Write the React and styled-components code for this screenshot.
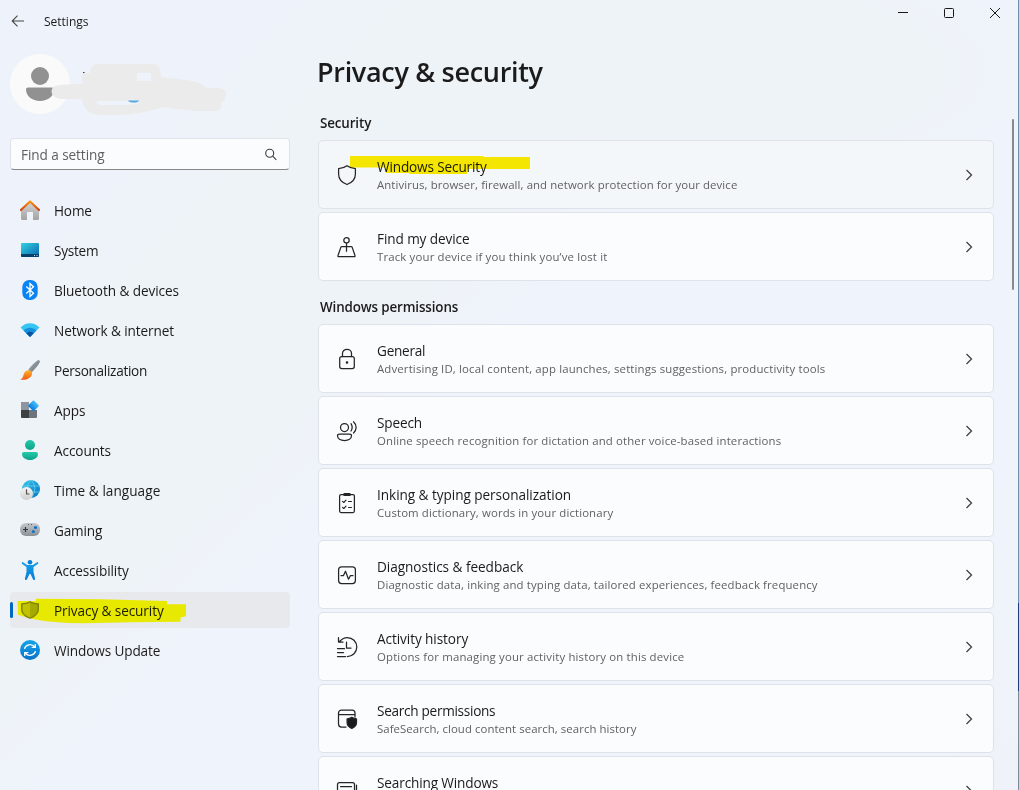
import React from "react";
import styled, { createGlobalStyle } from "styled-components";

const GlobalStyle = createGlobalStyle`
  * { box-sizing: border-box; }
  html, body { margin: 0; padding: 0; overflow: hidden; }
  body { font-family: "Open Sans", "Noto Sans", sans-serif; color: #1b1b1b; }
`;

const Window = styled.div`
  width: 1019px;
  height: 790px;
  display: flex;
  overflow: hidden;
  background:
    radial-gradient(ellipse 330px 130px at 730px 70px, #eef3f7 0 45%, #eef3f700 100%),
    linear-gradient(135deg, #eef3fb 0%, #eef3fb 15%, #eef3f7 26%, #eef3f7 36%, #eff3fb 47%, #eff3fb 80%, #eff3f9 100%);
`;

const Sidebar = styled.aside`
  width: 300px;
  flex: none;
  padding: 0 10px;
  display: flex;
  flex-direction: column;
`;

const TitleBar = styled.header`
  height: 42px;
  flex: none;
  display: flex;
  align-items: center;
  gap: 19px;
  font-size: 12px;
`;

const BackButton = styled.button`
  width: 15px;
  height: 14px;
  padding: 0;
  border: 0;
  background: none;
  display: flex;
`;

const Profile = styled.div`
  position: relative;
  height: 96px;
  flex: none;
  padding-top: 12px;
`;

const Avatar = styled.div`
  width: 60px;
  height: 60px;
  border-radius: 50%;
  background: #fafafa;
  display: flex;
  align-items: center;
  justify-content: center;
`;

const Scribble = styled.svg`
  position: absolute;
  left: 40px;
  top: 18px;
`;

const SearchBox = styled.label`
  height: 32px;
  flex: none;
  display: flex;
  align-items: center;
  justify-content: space-between;
  padding: 0 12px 0 10px;
  border: 1px solid #dfe3e7;
  border-bottom: 1px solid #868788;
  border-radius: 4px;
  background: #fbfcfe;
  color: #5f6061;
  font-size: 13.6px;
`;

const Label = styled.span`
  white-space: nowrap;
  letter-spacing: ${(p) => p.$track || 0}px;
`;

const Nav = styled.nav`
  margin-top: 22px;
  display: flex;
  flex-direction: column;
  gap: 4px;
`;

const NavRow = styled.a`
  position: relative;
  height: 36px;
  display: flex;
  align-items: center;
  gap: 14px;
  padding-left: 10px;
  border-radius: 4px;
  font-size: 13.6px;
  background: ${(p) => (p.$active ? "#e8e9ed" : "transparent")};

  & > ${Label} { padding-top: 1px; }
`;

const ActiveMark = styled.span`
  position: absolute;
  left: 0;
  top: 10px;
  width: 3px;
  height: 16px;
  border-radius: 2px;
  background: #0067c0;
`;

const Marker = styled.svg`
  position: absolute;
  left: ${(p) => p.$x}px;
  top: ${(p) => p.$y}px;
  mix-blend-mode: multiply;
  pointer-events: none;
`;

const Content = styled.main`
  flex: 1;
  min-width: 0;
  padding-left: 18px;
`;

const Caption = styled.div`
  height: 26px;
  display: flex;
  justify-content: flex-end;
  align-items: center;
  gap: 34px;
  padding-right: 11px;
`;

const Heading = styled.h1`
  margin: 21px 0 0 -1px;
  height: 50px;
  line-height: 50px;
  font-size: 27px;
  font-weight: 600;
`;

const SectionTitle = styled.h2`
  margin: ${(p) => p.$top}px 0 7px 2px;
  height: 20px;
  line-height: 20px;
  font-size: 13.4px;
  font-weight: 600;
  letter-spacing: -0.13px;
`;

const CardList = styled.section`
  width: 676px;
  display: flex;
  flex-direction: column;
  gap: 3px;
`;

const Card = styled.article`
  position: relative;
  height: 69px;
  flex: none;
  display: flex;
  align-items: center;
  padding: 0 18px 0 17px;
  border: 1px solid #dfe3e9;
  border-radius: 5px;
  background: ${(p) => (p.$hover ? "#f4f7fa" : "#fbfcfe")};
`;

const CardText = styled.div`
  flex: 1;
  margin-left: 19px;
  padding-top: 2px;
  display: flex;
  flex-direction: column;
`;

const CardTitle = styled(Label)`
  font-size: 13.6px;
  line-height: 18px;
`;

const CardNote = styled(Label)`
  min-height: 17px;
  font-size: 11.4px;
  line-height: 17px;
  color: #606163;
`;

const Edge = styled.div`
  width: 1px;
  height: 790px;
  flex: none;
  background: linear-gradient(#6f91ae 0 603px, #1e3c82 603px 691px, #7d8b99 691px);
`;

const ScrollTrack = styled.div`
  width: 6px;
  flex: none;
  padding-top: 119px;
`;

const ScrollThumb = styled.div`
  width: 2px;
  height: 171px;
  border-radius: 1px;
  background: #868a8c;
`;

const NavSvg = ({ children }) => (
  <svg width="20" height="20" viewBox="0 0 20 20" fill="none">{children}</svg>
);

const Grad = ({ id, a, b, x2 = 0, y2 = 1 }) => (
  <defs>
    <linearGradient id={id} x1="0" y1="0" x2={x2} y2={y2}>
      <stop stopColor={a} /><stop offset="1" stopColor={b} />
    </linearGradient>
  </defs>
);

const navItems = [
  ["Home", -0.15, <NavSvg>
    <Grad id="hm" a="#d6d6d6" b="#a3a3a3" /><Grad id="hr" a="#f7920d" b="#d6440f" />
    <path d="M1 9.5 10 1.5l9 8V18.5a1.5 1.5 0 0 1-1.5 1.5H13v-7.4a.6.6 0 0 0-.6-.6H7.6a.6.6 0 0 0-.6.6V20H2.5A1.5 1.5 0 0 1 1 18.500Z" fill="url(#hm)" />
    <path d="M.9 10 10 1.500 19.100 10" stroke="url(#hr)" strokeWidth="2.200" strokeLinecap="round" strokeLinejoin="round" />
  </NavSvg>],
  ["System", -0.25, <NavSvg>
    <Grad id="sy" a="#32d2e2" b="#0b64ae" x2={1} />
    <rect x="1" y="3" width="18" height="14" rx="1" fill="url(#sy)" />
    <path d="M1 14h18v2a1 1 0 0 1-1 1H2a1 1 0 0 1-1-1Z" fill="#07406b" />
    <path d="M14 15.500h1m1.500 0h1" stroke="#b9e8f7" />
  </NavSvg>],
  ["Bluetooth & devices", -0.07, <NavSvg>
    <rect x="2.300" width="15.400" height="20" rx="7" fill="#0a84f5" />
    <path d="m6.300 6.500 7.200 6.800L10 16.500v-13l3.500 3.200-7.200 6.800" stroke="#fff" strokeWidth="1.300" />
  </NavSvg>],
  ["Network & internet", -0.09, <NavSvg>
    <path d="M.5 7.500C6 1.800 14 1.800 19.500 7.500L10 17Z" fill="#36c5f0" />
    <path d="M3.600 10.600c3.800-3.800 9-3.800 12.800 0L10 17Z" fill="#1490df" />
    <path d="M6.300 13.300c2.200-2.200 5.200-2.200 7.400 0L10 17Z" fill="#0d529c" />
  </NavSvg>],
  ["Personalization", -0.3, <NavSvg>
    <Grad id="br" a="#a8afb5" b="#66717b" x2={1} /><Grad id="bt" a="#ffb52c" b="#ed5a10" />
    <path d="M8.300 9.800C11.300 5.800 14.800 2.200 17.800.3c1.400-.6 2.500.5 1.900 1.900-1.700 3.500-5 7-8.700 10.900Z" fill="url(#br)" />
    <path d="M8 10.300c2.500-.5 4.600 1.700 3.900 4.200-1 3.900-6.300 6.100-11.600 5 2-.7 2.600-2.100 3.200-4.500.6-2.500 2-4.300 4.500-4.700Z" fill="url(#bt)" />
  </NavSvg>],
  ["Apps", -0.05, <NavSvg>
    <Grad id="ap" a="#4ac0fb" b="#087be0" />
    <path d="M1 2h8v8H1Z" fill="#8d969e" /><path d="M1 10h8v8H2a1 1 0 0 1-1-1Z" fill="#3d4144" />
    <path d="M9 10h8v7a1 1 0 0 1-1 1H9Z" fill="#6d747b" />
    <rect x="9.500" y="1.700" width="8" height="8" rx="1" transform="rotate(45 13.500 5.700)" fill="url(#ap)" />
  </NavSvg>],
  ["Accounts", -0.1, <NavSvg>
    <Grad id="ac" a="#24caa9" b="#0da389" />
    <circle cx="10" cy="5" r="5" fill="url(#ac)" />
    <path d="M4 12h12a2 2 0 0 1 2 2c0 3.500-3.500 6-8 6s-8-2.500-8-6a2 2 0 0 1 2-2Z" fill="url(#ac)" />
  </NavSvg>],
  ["Time & language", 0.04, <NavSvg>
    <Grad id="gl" a="#35c6ea" b="#0874c5" x2={1} /><Grad id="ck" a="#f5f5f5" b="#cfcfcf" />
    <circle cx="11" cy="9" r="9" fill="url(#gl)" />
    <path d="M3 6h16M10 12h10M11 0c-5 5-5 12 0 18M11 0c5 5 5 12 0 18" stroke="#72d9f2" strokeWidth=".7" />
    <circle cx="6.500" cy="13.500" r="6.500" fill="url(#ck)" />
    <path d="M6.500 9.300V14h3" stroke="#555" strokeWidth="1.200" />
  </NavSvg>],
  ["Gaming", -0.17, <NavSvg>
    <Grad id="gm" a="#c5c9cd" b="#8a9197" />
    <rect y="3" width="20" height="13" rx="6" fill="url(#gm)" />
    <path d="M5.500 7v5M3 9.500h5" stroke="#35393d" strokeWidth="1.200" />
    <circle cx="15.500" cy="7.500" r="1.600" fill="#0872c9" /><circle cx="13.300" cy="11.500" r="1.500" fill="#0872c9" />
    <path d="M8 4.600h1m2 0h1" stroke="#4b5054" />
  </NavSvg>],
  ["Accessibility", -0.1, <NavSvg>
    <Grad id="ax" a="#16a0ea" b="#087ed5" />
    <circle cx="10" cy="2.300" r="2.300" fill="#087fd4" />
    <path d="M3 2.200 7.200 4.900h5.600L17 2.200c1.200-.5 1.800 1 .8 1.700L13.500 7v5l1.600 6.700c.2 1.500-1.600 1.800-2.100.5L10.500 14h-1L7 19.200c-.6 1.300-2.300 1-2.100-.5L6.500 12V7L2.200 3.900C1.300 3.200 2 1.700 3 2.200Z" fill="url(#ax)" />
  </NavSvg>],
  ["Privacy & security", -0.1, <NavSvg>
    <path d="M10 1c2.700 1.700 5.500 2.200 9 2.200V9c0 4.500-3.400 7.800-9 10-5.600-2.200-9-5.500-9-10V3.200C4.500 3.200 7.300 2.700 10 1Z" fill="#83878a" />
    <path d="M10 2.500c2.300 1.400 4.600 1.900 7.500 2V9c0 3.700-2.700 6.500-7.500 8.500Z" fill="#a6a9ab" />
    <path d="M10 2.500C7.700 3.900 5.400 4.400 2.500 4.500V9c0 3.700 2.700 6.500 7.500 8.500Z" fill="#c0c2c3" />
  </NavSvg>],
  ["Windows Update", -0.12, <NavSvg>
    <Grad id="wu" a="#17a4e9" b="#0873cb" />
    <circle cx="10" cy="10" r="10" fill="url(#wu)" />
    <path d="M4.500 8.800C5.500 4.500 11.500 3 14.800 6.900M15.500 11.200C14.500 15.500 8.500 17 5.200 13.100M15.300 3.900v3.500h-3.600M4.700 16.100v-3.500h3.600" stroke="#fff" strokeWidth="1.300" />
  </NavSvg>],
];

const CardSvg = ({ children }) => (
  <svg width="22" height="22" viewBox="0 0 22 22" fill="none" stroke="#252525" strokeWidth="1.250" strokeLinecap="round" strokeLinejoin="round">{children}</svg>
);

const security = [
  ["Windows Security", "Antivirus, browser, firewall, and network protection for your device",
    <path d="M11 1.700c2.500 1.900 5.200 2.600 8.400 2.900V10c0 5-3 8.500-8.400 10.500C5.600 18.500 2.600 15 2.600 10V4.600C5.800 4.300 8.500 3.600 11 1.700Z" />, -0.14, 0.09],
  ["Find my device", "Track your device if you think you\u2019ve lost it",
    <><circle cx="10.500" cy="4.300" r="2.700" /><path d="M10.500 7v8.200M5.800 10.500h9.400c.5 0 .8.200.9.600L19 19.500c.3.700-.1 1.200-.8 1.200H2.800c-.7 0-1.100-.5-.8-1.200l2.900-8.400c.1-.4.400-.6.900-.6Z" /></>, -0.1, 0.16],
];

const permissions = [
  ["General", "Advertising ID, local content, app launches, settings suggestions, productivity tools",
    <><rect x="3.700" y="8.500" width="14.600" height="12" rx="2" /><path d="M6.500 8.500V5.300C6.500 3 8.500 1.300 11 1.300s4.500 1.700 4.500 4v3.200" /><circle cx="11" cy="14.500" r=".7" fill="#252525" /></>, -0.25, 0.15],
  ["Speech", "Online speech recognition for dictation and other voice-based interactions",
    <><circle cx="8.500" cy="7.500" r="4" /><path d="M3.500 14h10c1.200 0 2 .7 2 1.800 0 2.800-3 4.700-7 4.700s-7-1.900-7-4.700c0-1.100.8-1.800 2-1.800ZM15 3.700c1.500 2.300 1.500 5 0 7.300M17.500 1.800c3.500 3.300 3.500 8 0 11.200" /></>, -0.15, 0.145],
  ["Inking & typing personalization", "Custom dictionary, words in your dictionary",
    <><rect x="3.600" y="2.600" width="14.800" height="18" rx="1.500" /><path d="M8 1.500h6v2H8ZM6.500 9.300l1.300 1.200L10 8.200M12.500 9.500h3M6.500 15.300l1.300 1.200 2.200-2.300M12.500 15.500h3" strokeWidth="1.100" /></>, -0.05, 0.12],
  ["Diagnostics & feedback", "Diagnostic data, inking and typing data, tailored experiences, feedback frequency",
    <><rect x="2.600" y="2.800" width="16.800" height="16.800" rx="3" /><path d="M5 11.500h2.500l2-4.300 3 8 2-3.700H17" /></>, -0.04, 0.135],
  ["Activity history", "Options for managing your activity history on this device",
    <><path d="M3 6C5.500 3 8 1.500 11.300 1.500a9.500 9.500 0 0 1 0 19M2.500 1.500V6H7M10.500 6v6H15M1.500 12.700h7M1.500 16.500h6M1.500 20.500h8" /></>, -0.08, 0.16],
  ["Search permissions", "SafeSearch, cloud content search, search history",
    <><path d="M19 9V5a3 3 0 0 0-3-3H5.500a3 3 0 0 0-3 3v11a3 3 0 0 0 3 3H10M2.500 6.500H19" /><path d="M15.800 9.300c1.500 1 3 1.500 4.700 1.600v3.500c0 2.700-1.800 4.700-4.700 6-2.900-1.300-4.700-3.300-4.700-6v-3.500c1.700-.1 3.200-.6 4.700-1.600Z" fill="#1b1b1b" /></>, -0.29, 0.06],
  ["Searching Windows", "",
    <><rect x="1.500" y="2.500" width="17" height="12" rx="2" /><path d="M4.500 6.500h11M20.500 5v10a3 3 0 0 1-3 3H5" /></>, -0.14, 0],
];

function Setting({ item, hover, children }) {
  const [title, note, icon, titleTrack, noteTrack] = item;
  return (
    <Card $hover={hover}>
      {children}
      <CardSvg>{icon}</CardSvg>
      <CardText>
        <CardTitle $track={titleTrack}>{title}</CardTitle>
        <CardNote $track={noteTrack}>{note}</CardNote>
      </CardText>
      <svg width="10" height="14" viewBox="0 0 10 14" fill="none" stroke="#414141" strokeWidth="1.300"><path d="m1.500 2 5 5-5 5" /></svg>
    </Card>
  );
}

export default function App() {
  return (
    <>
      <GlobalStyle />
      <Window>
        <Sidebar>
          <TitleBar>
            <BackButton aria-label="Back">
              <svg width="15" height="14" viewBox="0 0 15 14" fill="none" stroke="#454545" strokeWidth="1.100"><path d="M14 7H2.500M7.500 1.700 2.200 7l5.300 5.300" /></svg>
            </BackButton>
            <Label>Settings</Label>
          </TitleBar>
          <Profile>
            <Avatar>
              <svg width="30" height="36" viewBox="0 0 30 36" fill="#919191"><circle cx="15" cy="10" r="9" /><path d="M3 21.500h24c1.300 0 2 .8 2 2 0 6.500-6 11.500-14 11.500S1 30 1 23.500c0-1.200.7-2 2-2Z" /></svg>
            </Avatar>
            <Scribble width="180" height="60" viewBox="50 60 180 60">
              <path d="M83 72.500h1.500M83 81.500h1M93 98.500h1" stroke="#343a40" />
              <path fillRule="evenodd" fill="#ebebeb" d="M53 87q5-3 28-3l2-2q-3-5 0-9h7q0-9 8-9h55q8 0 8 13c15 3 35 1 46 11h12q8 1 7 7-1 5-5 8 2 6-5 8h-22q-20-2-31-4c-15 5-31 8-49 8H100q-16-1-18-16H60q-12-3-7-12ZM137 73h14v8h-14ZM97 101h33q10 3 14 0-7 4-19 4h-25q-4-1-3-4Z" />
              <path d="M128 100.500h11q-1 2-5 2-5 0-6-2Z" fill="#55a7df" />
            </Scribble>
          </Profile>
          <SearchBox>
            <Label $track={-0.08}>Find a setting</Label>
            <svg width="13" height="13" viewBox="0 0 13 13" fill="none" stroke="#3c3c3c" strokeWidth="1.100"><circle cx="5.700" cy="5.200" r="4" /><path d="m8.700 8.200 3.600 3.600" /></svg>
          </SearchBox>
          <Nav>
            {navItems.map(([name, track, icon]) => {
              const active = name === "Privacy & security";
              return (
                <NavRow key={name} $active={active}>
                  {active && <ActiveMark />}
                  {icon}
                  <Label $track={track}>{name}</Label>
                  {active && (
                    <Marker $x={7} $y={6} width="170" height="26" viewBox="17 598 170 26">
                      <path fill="#ffff00" d="M17.500 601H36v-2.300q65 0 131 2.300v3.300h19V616l-5.500 1.700v4Q132 622 83 623.300q-30 0-53-4.800l-12-3.800Z" />
                    </Marker>
                  )}
                </NavRow>
              );
            })}
          </Nav>
        </Sidebar>
        <Content>
          <Caption>
            <svg width="12" height="12" viewBox="0 0 12 12"><path d="M1 5.500h10" stroke="#191919" /></svg>
            <svg width="12" height="12" viewBox="0 0 12 12"><rect x="1.500" y="1.500" width="9" height="9" rx="1" fill="none" stroke="#191919" /></svg>
            <svg width="12" height="12" viewBox="0 0 12 12"><path d="m1 1 10 10M11 1 1 11" stroke="#191919" /></svg>
          </Caption>
          <Heading><Label $track={-0.31}>Privacy &amp; security</Label></Heading>
          <SectionTitle $top={16}>Security</SectionTitle>
          <CardList>
            {security.map((item, i) => (
              <Setting key={item[0]} item={item} hover={i === 0}>
                {i === 0 && (
                  <Marker $x={31} $y={15} width="180" height="18" viewBox="350 156 180 18">
                    <path fill="#ffee00" d="M350 156h133.500v1H530v12h-63v5h-58v-1h-23v-5.500h-36Z" />
                  </Marker>
                )}
              </Setting>
            ))}
          </CardList>
          <SectionTitle $top={16}>Windows permissions</SectionTitle>
          <CardList>
            {permissions.map((item) => <Setting key={item[0]} item={item} />)}
          </CardList>
        </Content>
        <ScrollTrack><ScrollThumb /></ScrollTrack>
        <Edge />
      </Window>
    </>
  );
}
